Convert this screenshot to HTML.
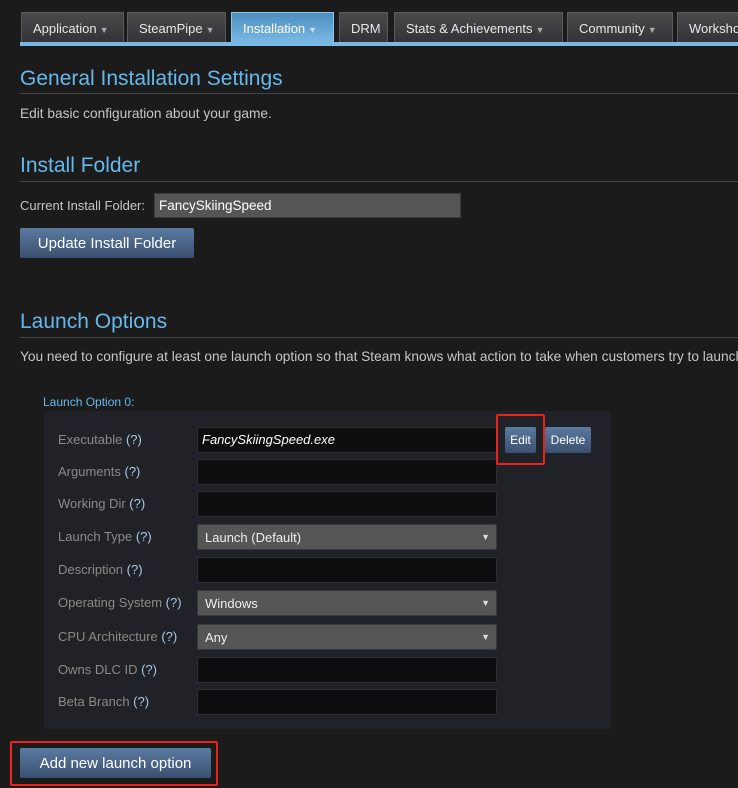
<!DOCTYPE html>
<html><head><meta charset="utf-8"><style>
body{margin:0;width:738px;height:788px;background:#1b1b1b;font-family:"Liberation Sans","DejaVu Sans",sans-serif;overflow:hidden;position:relative;color:#c6c6c6}
.a{position:absolute}
.tab{position:absolute;top:12px;height:30px;background:linear-gradient(#4a4a4c,#333336);border:1px solid #5a5a5c;border-bottom:none;color:#e8e8e8;font-size:13px;line-height:32px;padding-left:11px;box-sizing:border-box;white-space:nowrap;overflow:hidden}
.tab.on{background:linear-gradient(#4c8dbd,#7ab9e4);border-color:#8cc6ee;color:#fff}
.car{font-size:9px;color:#aaa;margin-left:3px}
h2{position:absolute;margin:0;font-weight:normal;font-size:21px;color:#66b8ec;left:20px}
.hr{position:absolute;left:20px;right:0;height:1px;background:#444}
.t{position:absolute;font-size:13.7px;color:#c6c6c6;white-space:nowrap}
.btn{position:absolute;background:linear-gradient(#5a7aa0,#3c5070);border-radius:2px;color:#fff;font-size:15px;text-align:center;box-sizing:border-box}
.lbl{position:absolute;left:58px;font-size:13px;color:#8a8a8a}
.lbl b{font-weight:normal;color:#a9c9e4}
.in{position:absolute;left:197px;width:300px;height:26px;background:#0d0e10;border:1px solid #2d2f33;box-sizing:border-box;border-radius:2px}
.sel{background:#555;border-color:#3a3a3a;color:#eee;font-size:13px;line-height:25px;padding-left:7px}
.sel:after{content:"▼";position:absolute;right:6px;top:0;font-size:9px;color:#ddd}
.red{position:absolute;border:2px solid #e8231c;border-radius:2px;box-sizing:border-box}
</style></head><body>
<div class="a" style="left:20px;right:0;top:42px;height:4px;background:#7ab9e4"></div>
<div class="tab" style="left:21px;width:103px">Application<span class="car">▼</span></div>
<div class="tab" style="left:127px;width:99px">SteamPipe<span class="car">▼</span></div>
<div class="tab on" style="left:231px;width:103px">Installation<span class="car" style="color:#cde">▼</span></div>
<div class="tab" style="left:339px;width:49px">DRM</div>
<div class="tab" style="left:394px;width:169px">Stats &amp; Achievements<span class="car">▼</span></div>
<div class="tab" style="left:567px;width:106px">Community<span class="car">▼</span></div>
<div class="tab" style="left:677px;width:70px">Workshop</div>

<h2 style="top:67px">General Installation Settings</h2>
<div class="hr" style="top:93px"></div>
<div class="t" style="left:20px;top:106px">Edit basic configuration about your game.</div>

<h2 style="top:154px">Install Folder</h2>
<div class="hr" style="top:181px"></div>
<div class="t" style="left:20px;top:198px;font-size:13px">Current Install Folder:</div>
<div class="a" style="left:154px;top:193px;width:307px;height:25px;background:#555;border:1px solid #3a3a3a;box-sizing:border-box;color:#fff;font-size:13.5px;line-height:23px;padding-left:4px">FancySkiingSpeed</div>
<div class="btn" style="left:20px;top:228px;width:174px;height:30px;line-height:31px">Update Install Folder</div>

<h2 style="top:310px">Launch Options</h2>
<div class="hr" style="top:337px"></div>
<div class="t" style="left:20px;top:349px">You need to configure at least one launch option so that Steam knows what action to take when customers try to launch</div>

<div class="a" style="left:43px;top:395px;font-size:12px;color:#66b8ec">Launch Option 0:</div>
<div class="a" style="left:44px;top:411px;width:567px;height:318px;background:#202227"></div>

<div class="lbl" style="top:432px">Executable <b>(?)</b></div>
<div class="in" style="top:427px;color:#fff;font-style:italic;font-size:13px;line-height:24px;padding-left:4px">FancySkiingSpeed.exe</div>
<div class="lbl" style="top:464px">Arguments <b>(?)</b></div><div class="in" style="top:459px"></div>
<div class="lbl" style="top:496px">Working Dir <b>(?)</b></div><div class="in" style="top:491px"></div>
<div class="lbl" style="top:529px">Launch Type <b>(?)</b></div><div class="in sel" style="top:524px">Launch (Default)</div>
<div class="lbl" style="top:562px">Description <b>(?)</b></div><div class="in" style="top:557px"></div>
<div class="lbl" style="top:595px">Operating System <b>(?)</b></div><div class="in sel" style="top:590px">Windows</div>
<div class="lbl" style="top:629px">CPU Architecture <b>(?)</b></div><div class="in sel" style="top:624px">Any</div>
<div class="lbl" style="top:662px">Owns DLC ID <b>(?)</b></div><div class="in" style="top:657px"></div>
<div class="lbl" style="top:694px">Beta Branch <b>(?)</b></div><div class="in" style="top:689px"></div>

<div class="btn" style="left:505px;top:427px;width:31px;height:26px;line-height:26px;font-size:12px">Edit</div>
<div class="btn" style="left:545px;top:427px;width:46px;height:26px;line-height:26px;font-size:12px">Delete</div>
<div class="red" style="left:496px;top:414px;width:49px;height:51px"></div>

<div class="btn" style="left:20px;top:748px;width:191px;height:30px;line-height:31px">Add new launch option</div>
<div class="red" style="left:10px;top:741px;width:208px;height:45px"></div>
</body></html>
